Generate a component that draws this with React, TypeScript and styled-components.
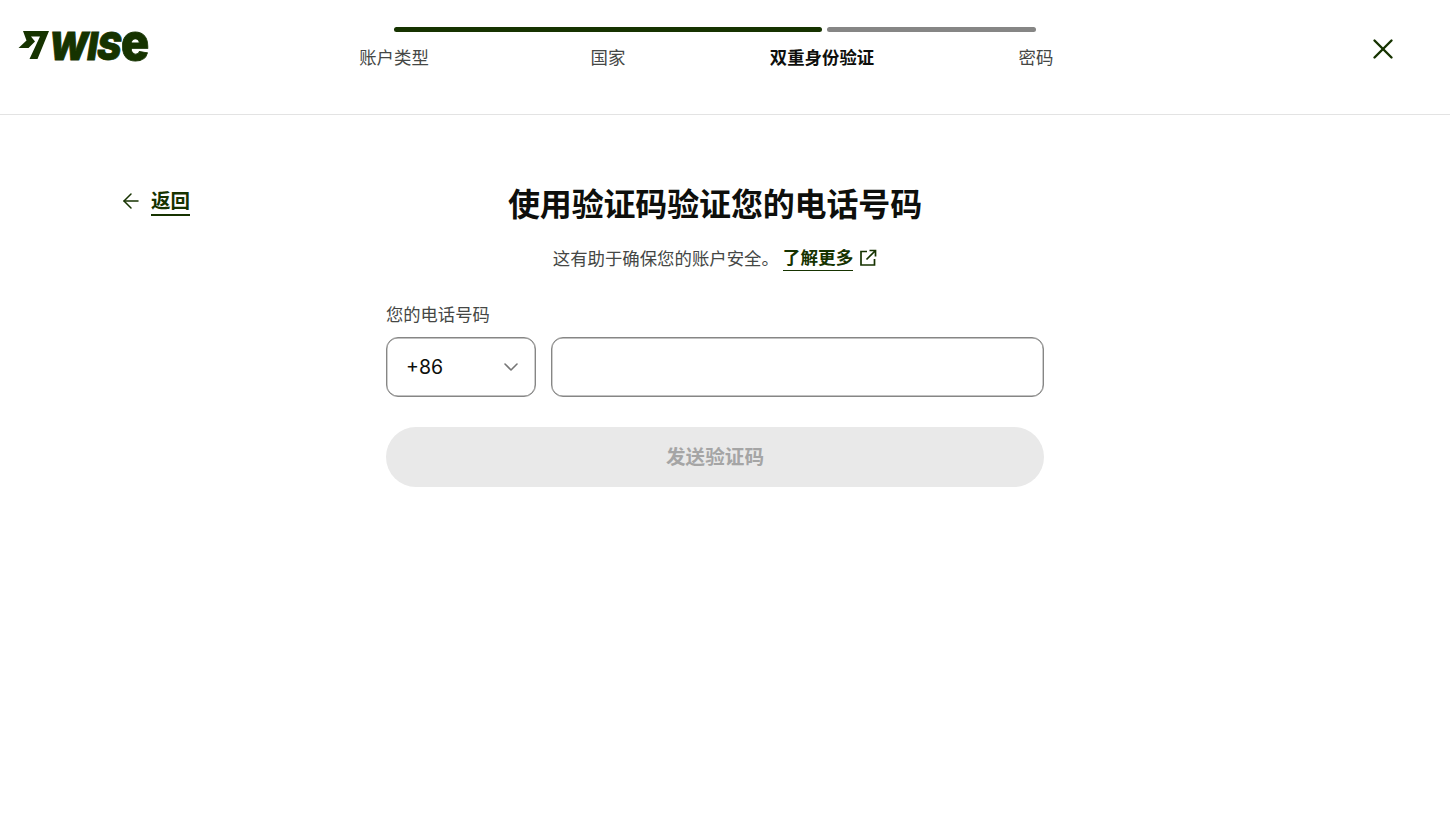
import React from 'react';
import styled, { createGlobalStyle } from 'styled-components';
import { ArrowLeft, ChevronDown, X } from 'lucide-react';

const GlobalStyle = createGlobalStyle`
	html, body {
		margin: 0;
		background: #fff;
		font-family: Inter, 'Noto Sans CJK SC', sans-serif;
		color: #454745;
	}
`;

const FOREST = '#163300';

const Page = styled.div`
	width: 1450px;
	height: 826px;
	overflow: hidden;
`;

const Header = styled.header`
	box-sizing: border-box;
	height: 115px;
	border-bottom: 1px solid #e3e3e3;
	display: grid;
	grid-template-columns: 394px 642px 1fr;
`;

const Logo = styled.a`
	display: flex;
	align-items: flex-start;
	padding: 30px 0 0 18px;
	color: ${FOREST};
`;

const LogoWord = styled.span`
	display: inline-block;
	height: 29px;
	transform: scaleX(0.93);
	transform-origin: left top;
	white-space: nowrap;
	font-family: Inter, sans-serif;
	font-weight: 900;
	font-style: italic;
	font-size: 39px;
	line-height: 25px;
	letter-spacing: -1px;
	margin-left: -2px;
	-webkit-text-stroke: 0.8px ${FOREST};
`;

const LogoE = styled.span`
	font-size: 50px;
	font-style: normal;
	letter-spacing: 0;
	margin-left: 1px;
`;

const Stepper = styled.nav`
	padding-top: 27px;
`;

const Bars = styled.div`
	display: grid;
	grid-template-columns: 428px 209px;
	gap: 5px;
`;

const Bar = styled.div<{ $done?: boolean }>`
	height: 5px;
	border-radius: 3px;
	background: ${(p) => (p.$done ? FOREST : '#868685')};
`;

const Steps = styled.ol`
	list-style: none;
	margin: 14px 0 0;
	padding: 0;
	display: flex;
	justify-content: space-between;
`;

const Step = styled.li<{ $active?: boolean }>`
	width: 0;
	display: flex;
	justify-content: center;
	white-space: nowrap;
	font-size: 17.4px;
	line-height: 24px;
	font-weight: ${(p) => (p.$active ? 700 : 400)};
	color: ${(p) => (p.$active ? '#0e0f0c' : '#454745')};
`;

const HeaderEnd = styled.div`
	display: flex;
	justify-content: flex-end;
	padding: 32px 50px 0 0;
	color: ${FOREST};
`;

const Main = styled.main`
	display: grid;
	grid-template-columns: 386px 658px 1fr;
`;

const BackCol = styled.div`
	padding: 74px 0 0 119px;
`;

const BackLink = styled.a`
	display: inline-flex;
	align-items: flex-start;
	gap: 8px;
	color: ${FOREST};
`;

const BackIcon = styled.span`
	display: flex;
`;

const BackText = styled.span`
	font-size: 19.5px;
	line-height: 25px;
	font-weight: 600;
	border-bottom: 2px solid ${FOREST};
`;

const Form = styled.section`
	padding-top: 68px;
`;

const Title = styled.h1`
	margin: 0;
	text-align: center;
	font-size: 32px;
	line-height: 44px;
	font-weight: 700;
	letter-spacing: -0.15px;
	color: #0e0f0c;
`;

const Subtitle = styled.p`
	margin: 19px 0 0;
	display: flex;
	justify-content: center;
	align-items: flex-start;
	font-size: 17.4px;
	line-height: 25px;
`;

const LearnMore = styled.a`
	margin-left: 4px;
	font-weight: 600;
	font-size: 17.6px;
	line-height: 24px;
	color: ${FOREST};
	border-bottom: 1px solid ${FOREST};
`;

const External = styled.svg`
	margin: 3px 0 0 6px;
	color: ${FOREST};
`;

const FieldLabel = styled.label`
	display: block;
	margin-top: 32px;
	font-size: 17.3px;
	line-height: 24px;
`;

const PhoneRow = styled.div`
	display: grid;
	grid-template-columns: 150px 1fr;
	gap: 15px;
	margin-top: 10px;
`;

const Select = styled.div`
	box-sizing: border-box;
	height: 60px;
	border: 1px solid #868685;
	box-shadow: inset 0 0 0 0.4px #868685;
	border-radius: 12px;
	padding: 0 12px 0 19px;
	display: flex;
	align-items: center;
	justify-content: space-between;
	font-size: 19.5px;
	color: #0e0f0c;
`;

const Input = styled.input`
	box-sizing: border-box;
	height: 60px;
	width: 100%;
	border: 1px solid #868685;
	box-shadow: inset 0 0 0 0.4px #868685;
	border-radius: 12px;
	background: #fff;
	outline: none;
`;

const Submit = styled.button`
	display: block;
	width: 100%;
	height: 60px;
	margin-top: 30px;
	padding: 0;
	border: 0;
	border-radius: 30px;
	background: #e9e9e9;
	color: #a5a5a5;
	font-family: inherit;
	font-size: 19.6px;
	line-height: 60px;
	font-weight: 600;
`;

const App = () => (
	<Page>
		<GlobalStyle />
		<Header>
			<Logo aria-label='Wise'>
				<svg width='33' height='29' viewBox='0 0 33 29' fill={FOREST}>
					<path d='M5 1H31L19.500 29H11.500L22 6.500H13L17 11.500L10.500 18H0.500L8.500 10.500Z' />
				</svg>
				<LogoWord>
					WIS<LogoE>e</LogoE>
				</LogoWord>
			</Logo>
			<Stepper>
				<Bars>
					<Bar $done />
					<Bar />
				</Bars>
				<Steps>
					<Step>账户类型</Step>
					<Step>国家</Step>
					<Step $active>双重身份验证</Step>
					<Step>密码</Step>
				</Steps>
			</Stepper>
			<HeaderEnd>
				<X size={34} strokeWidth={1.7} />
			</HeaderEnd>
		</Header>
		<Main>
			<BackCol>
				<BackLink>
					<BackIcon>
						<ArrowLeft size={24} strokeWidth={1.5} />
					</BackIcon>
					<BackText>返回</BackText>
				</BackLink>
			</BackCol>
			<Form>
				<Title>使用验证码验证您的电话号码</Title>
				<Subtitle>
					这有助于确保您的账户安全。
					<LearnMore>了解更多</LearnMore>
					<External width='18' height='18' viewBox='0 0 18 18' fill='none' stroke='currentColor' strokeWidth='1.7'>
						<path d='M8 2.500H2V16H15.500V10' />
						<path d='M7.500 10.500L16 2M10.500 1.500H16.500V7.500' />
					</External>
				</Subtitle>
				<FieldLabel>您的电话号码</FieldLabel>
				<PhoneRow>
					<Select>
						+86
						<ChevronDown size={24} strokeWidth={1.6} color='#767676' />
					</Select>
					<Input />
				</PhoneRow>
				<Submit disabled>发送验证码</Submit>
			</Form>
		</Main>
	</Page>
);

export default App;
